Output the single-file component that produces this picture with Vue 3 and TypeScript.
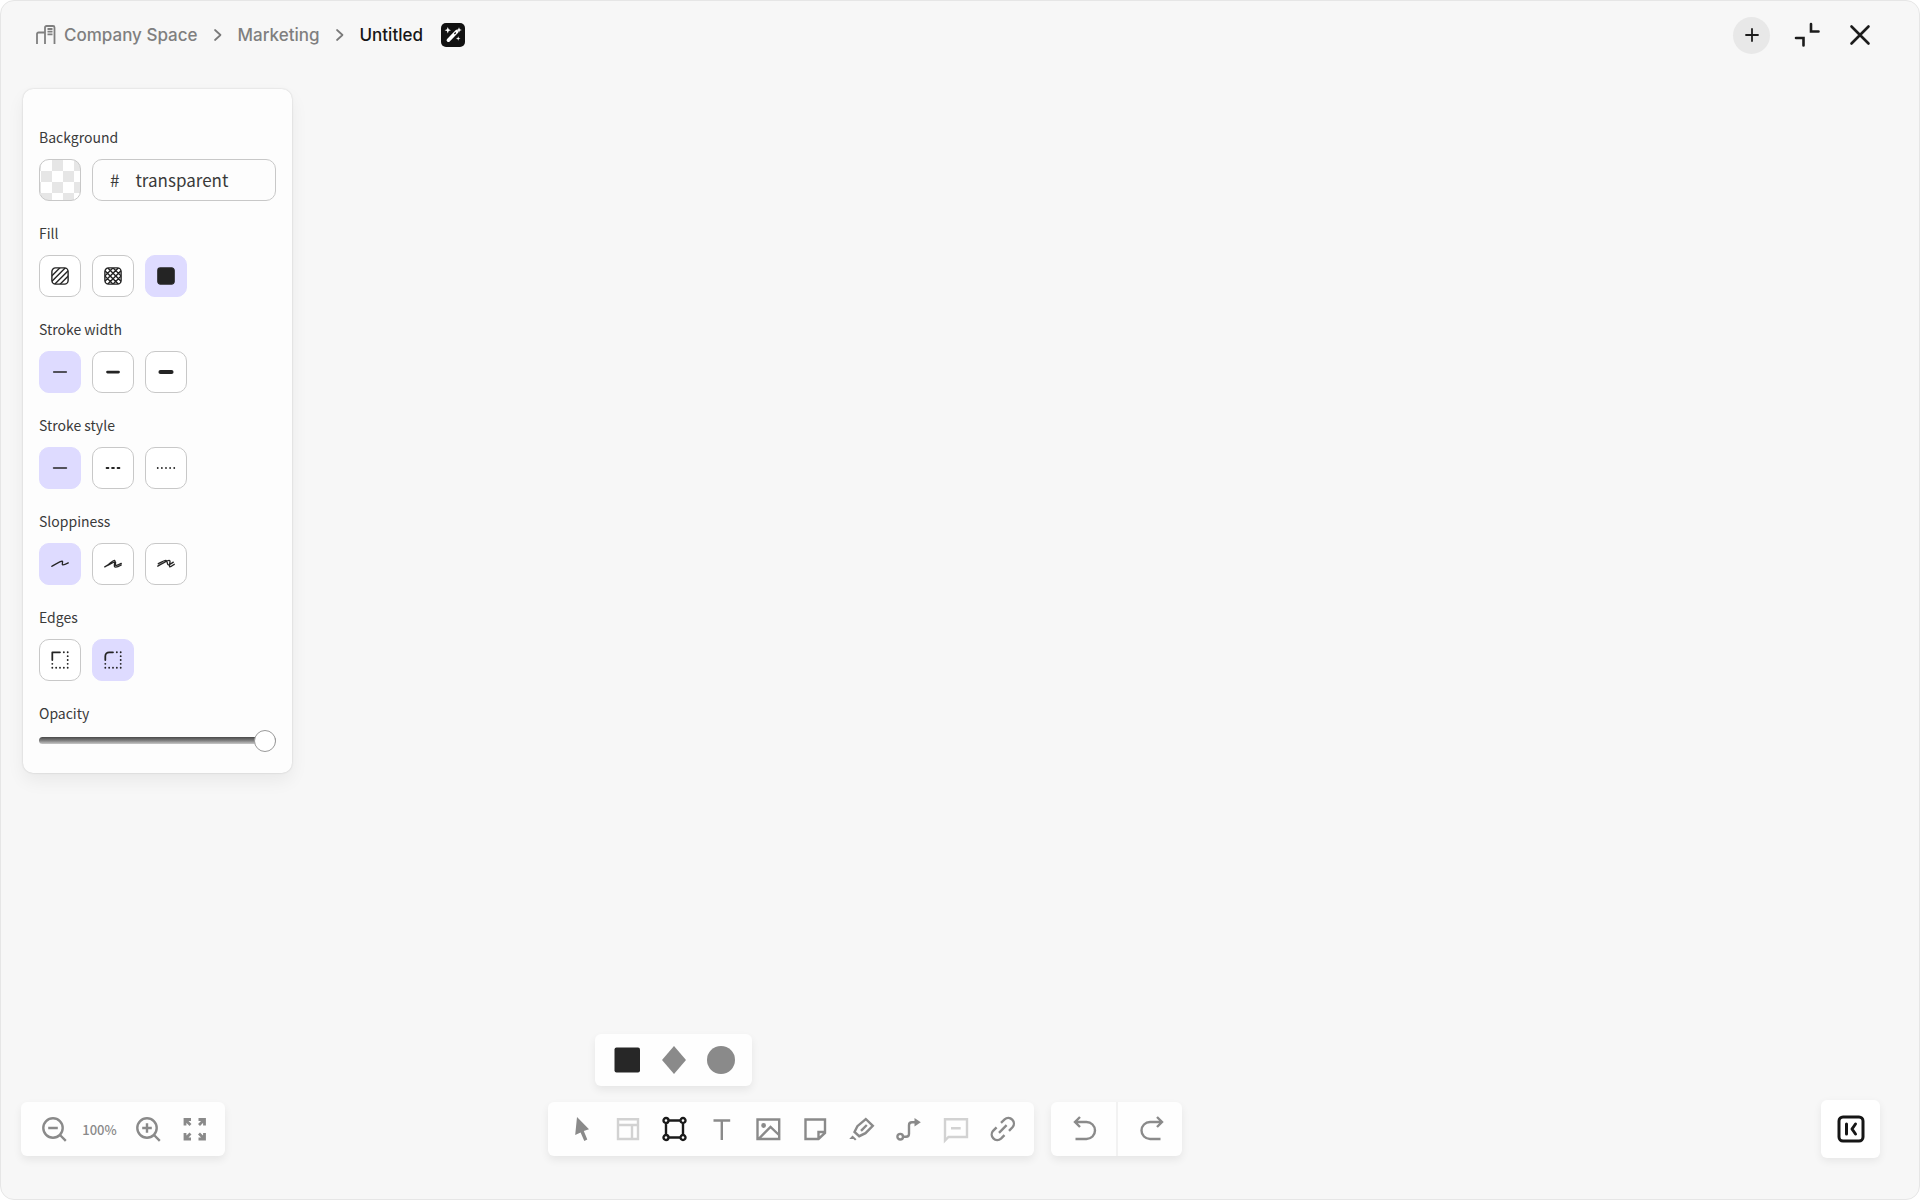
<script setup lang="ts">
import { ref } from 'vue'

interface Option {
  id: string
  label: string
  box: number
  paths: { d: string; w: number; fill?: boolean }[]
  hatch?: string
}
interface Group {
  id: string
  title: string
  options: Option[]
}

const square =
  'M5.879 2.625h8.242a3.254 3.254 0 0 1 3.254 3.254v8.242a3.254 3.254 0 0 1-3.254 3.254H5.88a3.254 3.254 0 0 1-3.254-3.254V5.88a3.254 3.254 0 0 1 3.254-3.254Z'

const groups: Group[] = [
  {
    id: 'fill',
    title: 'Fill',
    options: [
      {
        id: 'hachure', label: 'Hachure', box: 20, paths: [{ d: square, w: 1.25 }],
        hatch: 'M2.258 15.156 15.156 2.258M7.324 20.222 20.222 7.325m-20.444 5.35L12.675-.222m-8.157 18.34L17.416 5.22',
      },
      {
        id: 'cross', label: 'Cross-hatch', box: 20, paths: [{ d: square, w: 1.25 }],
        hatch: 'M2.426 15.044 15.044 2.426M7.383 20 20 7.383M0 12.617 12.617 0m-7.98 17.941L17.256 5.324m-2.211 12.25L2.426 4.956M20 12.617 7.383 0m5.234 20L0 7.383m17.941 7.98L5.324 2.745',
      },
      {
        id: 'solid', label: 'Solid', box: 20,
        paths: [{ d: 'M4.91 2.625h10.18a2.284 2.284 0 0 1 2.285 2.284v10.182a2.284 2.284 0 0 1-2.284 2.284H4.909a2.284 2.284 0 0 1-2.284-2.284V4.909a2.284 2.284 0 0 1 2.284-2.284Z', w: 1.25, fill: true }],
      },
    ],
  },
  {
    id: 'width',
    title: 'Stroke width',
    options: [
      { id: 'thin', label: 'Thin', box: 20, paths: [{ d: 'M4.2 10h11.6', w: 1.25 }] },
      { id: 'bold', label: 'Bold', box: 20, paths: [{ d: 'M5 10h10', w: 2.5 }] },
      { id: 'extra', label: 'Extra bold', box: 20, paths: [{ d: 'M5 10h10', w: 3.75 }] },
    ],
  },
  {
    id: 'style',
    title: 'Stroke style',
    options: [
      { id: 'line', label: 'Solid line', box: 20, paths: [{ d: 'M4.2 10h11.6', w: 1.5 }] },
      { id: 'dashed', label: 'Dashed', box: 24, paths: [{ d: 'M5 12h2M11 12h2M17 12h2', w: 2 }] },
      { id: 'dotted', label: 'Dotted', box: 24, paths: [{ d: 'M3 12v.01M7.5 12v.01M12 12v.01M16.5 12v.01M21 12v.01', w: 2 }] },
    ],
  },
  {
    id: 'slop',
    title: 'Sloppiness',
    options: [
      { id: 'architect', label: 'Architect', box: 20, paths: [{ d: 'M2.5 12.038c1.655-.885 5.9-3.292 8.568-4.354 2.668-1.063.101 2.821 1.32 3.104 1.218.283 5.112-1.814 5.112-1.814', w: 1.25 }] },
      { id: 'artist', label: 'Artist', box: 20, paths: [{ d: 'M2.5 12.563c1.655-.886 5.9-3.293 8.568-4.355 2.668-1.062.101 2.822 1.32 3.105 1.218.283 5.112-1.814 5.112-1.814m-13.469 2.23c2.963-1.586 6.13-5.62 7.468-4.998 1.338.623-1.153 4.11-.132 5.595 1.02 1.487 6.133-1.43 6.133-1.43', w: 1.25 }] },
      { id: 'cartoonist', label: 'Cartoonist', box: 20, paths: [{ d: 'M2.5 11.936c1.737-.879 8.627-5.346 10.42-5.268 1.795.078-.418 5.138.345 5.736.763.598 3.53-1.789 4.235-2.147M2.929 9.788c1.164-.519 5.47-3.28 6.987-3.114 1.519.165 1 3.827 2.121 4.109 1.122.281 3.839-2.016 4.606-2.42', w: 1.25 }] },
    ],
  },
  {
    id: 'edges',
    title: 'Edges',
    options: [
      {
        id: 'sharp', label: 'Sharp', box: 20,
        paths: [
          { d: 'M3 10V3H10', w: 1.6 },
          { d: 'M13.5 3v.01M17 3v.01M17 6.5v.01M17 10v.01M17 13.5v.01M17 17v.01M13.5 17v.01M10 17v.01M6.5 17v.01M3 17v.01M3 13.5v.01', w: 1.7 },
        ],
      },
      {
        id: 'round', label: 'Round', box: 20,
        paths: [
          { d: 'M3 10V6.5a3.5 3.5 0 0 1 3.5-3.5H10', w: 1.6 },
          { d: 'M13.5 3v.01M17 3v.01M17 6.5v.01M17 10v.01M17 13.5v.01M17 17v.01M13.5 17v.01M10 17v.01M6.5 17v.01M3 17v.01M3 13.5v.01', w: 1.7 },
        ],
      },
    ],
  },
]

const selected = ref<Record<string, string>>({
  fill: 'solid',
  width: 'thin',
  style: 'line',
  slop: 'architect',
  edges: 'round',
})
const background = ref('transparent')
const opacity = ref(100)
const tool = ref('Shape')
const shape = ref('Rectangle')

const tools = [
  { name: 'Select', d: '', solid: 'M-3-12 9 .3 3.8 2 7.3 10.5 4.3 12 .6 3.6-4.8 6z' },
  { name: 'Template', d: 'M-9-9.8H11V10H-9ZM-9-4H11M5-4V10', faint: true },
  { name: 'Shape', d: 'M-5-8.5H6M-5 8.5H6M-8-5.5V5.5M9-5.5V5.5M-10.5-8.5a2.5 2.5 0 1 0 5 0a2.5 2.5 0 1 0-5 0M6.5-8.5a2.5 2.5 0 1 0 5 0a2.5 2.5 0 1 0-5 0M-10.5 8.5a2.5 2.5 0 1 0 5 0a2.5 2.5 0 1 0-5 0M6.5 8.5a2.5 2.5 0 1 0 5 0a2.5 2.5 0 1 0-5 0' },
  { name: 'Text', d: 'M-7.5-8.5H9.2M.8-8.5V11' },
  { name: 'Image', d: 'M-10.5-9.5H11.2V10H-10.5ZM-9 9.5 2.5-2 11 6', solid: 'M-6.8-3.5a2.4 2.4 0 1 0 4.8 0a2.4 2.4 0 1 0-4.8 0' },
  { name: 'Note', d: 'M-9.5-9.5H10V4L3.5 10H-9.5ZM3.5 10V3H10' },
  { name: 'Highlighter', d: 'M3.8-10 10.8-3.2 3.5 4.2-2.8 7.2-7.5 3-4.6-2.8ZM-1 1.8 4.8-4', solid: 'M-9.5 6.5-5.5 10.2-7 11.5-8.5 10H-12.8Z' },
  { name: 'Connector', d: 'M-6 7.7H-3Q0 7.7 0 4.7V-3.7Q0-6.7 3-6.7H6M-11.6 7.7a2.8 2.8 0 1 0 5.6 0a2.8 2.8 0 1 0-5.6 0', solid: 'M5.5-11 11.8-6.7 5.5-2.4Z' },
  { name: 'Comment', d: 'M-11-9.7H11V8H-7.5L-11 11.5ZM-5-.8H4.7', faint: true },
  { name: 'Link', d: 'M-2 -6.2L1.6-9.6A5.6 5.6 0 0 1 9.5-1.7L6 1.8M1.5 6.2L-2 9.7A5.6 5.6 0 0 1-9.9 1.8L-6.4-1.7M-4 3.8 3.6-3.8' },
]

const shapes = [
  { name: 'Rectangle', d: 'M-10.5-12.5H11a2 2 0 0 1 2 2V10.5a2 2 0 0 1-2 2H-10.5a2 2 0 0 1-2-2V-10.5a2 2 0 0 1 2-2Z' },
  { name: 'Diamond', d: 'M0-14 12 0 0 14-12 0Z' },
  { name: 'Ellipse', d: 'M-14 0a14 14 0 1 0 28 0a14 14 0 1 0-28 0' },
]
</script>

<template>
  <div class="frame">
    <header class="top">
      <nav class="crumbs" aria-label="Breadcrumb">
        <a href="#" class="crumb space">
          <svg class="building" viewBox="0 0 20 20" aria-hidden="true">
            <path d="M1 19V9a1.5 1.5 0 0 1 1.5-1.5H9M9 19V2.5A1.5 1.5 0 0 1 10.5 1H17A1.5 1.5 0 0 1 18.5 2.5V19M11.5 4h5M11.5 6.7h5M11.5 9.4h5" />
          </svg>
          Company Space
        </a>
        <svg class="chevron" viewBox="0 0 8 12" aria-hidden="true"><path d="M1 1 6.5 6 1 11" /></svg>
        <a href="#" class="crumb">Marketing</a>
        <svg class="chevron" viewBox="0 0 8 12" aria-hidden="true"><path d="M1 1 6.5 6 1 11" /></svg>
        <a href="#" class="crumb current">Untitled</a>
        <button class="magic" type="button" aria-label="AI assistant">
          <svg viewBox="0 0 24 24" aria-hidden="true">
            <path class="wand" d="M7.4 17.2 15.6 8.7" />
            <path class="notch" d="M13.4 11 14.8 9.5" />
            <path class="spark" d="M6.8 4 7.7 6.3 10 7.2 7.7 8.1 6.8 10.4 5.9 8.1 3.6 7.2 5.9 6.3ZM18 4.2 18.8 6.2 20.8 7 18.8 7.8 18 9.8 17.2 7.8 15.2 7 17.2 6.2ZM17.2 13.2 17.8 14.9 19.5 15.5 17.8 16.1 17.2 17.8 16.6 16.1 14.9 15.5 16.6 14.9Z" />
          </svg>
        </button>
      </nav>
      <div class="actions">
        <button class="add" type="button" aria-label="Add">
          <svg class="ic thin" viewBox="-14 -14 28 28"><path d="M-6 0H6M0-6V6" /></svg>
        </button>
        <button type="button" aria-label="Collapse">
          <svg class="ic" viewBox="-14 -14 28 28"><path d="M3-11V-3.5H10.5M-12 3H-4.5V10.5" /></svg>
        </button>
        <button type="button" aria-label="Close">
          <svg class="ic" viewBox="-14 -14 28 28"><path d="M-8.5-8.5 8.5 8.5M8.5-8.5-8.5 8.5" /></svg>
        </button>
      </div>
    </header>

    <main class="canvas">
      <aside class="panel">
        <section class="field">
          <label class="title" for="bg">Background</label>
          <div class="row">
            <button class="swatch" type="button" aria-label="Pick background"></button>
            <div class="hex">
              <span>#</span>
              <input id="bg" v-model="background" type="text" />
            </div>
          </div>
        </section>
        <section v-for="g in groups" :key="g.id" class="field">
          <h2 class="title">{{ g.title }}</h2>
          <div class="row">
            <button
              v-for="o in g.options"
              :key="o.id"
              type="button"
              class="opt"
              :class="{ on: selected[g.id] === o.id }"
              :aria-label="o.label"
              @click="selected[g.id] = o.id"
            >
              <svg :viewBox="`0 0 ${o.box} ${o.box}`" aria-hidden="true">
                <clipPath v-if="o.hatch" :id="`clip-${o.id}`"><path :d="square" /></clipPath>
                <path v-for="(p, i) in o.paths" :key="i" :d="p.d" :stroke-width="p.w" :class="{ full: p.fill }" />
                <path v-if="o.hatch" :d="o.hatch" stroke-width="1.25" :clip-path="`url(#clip-${o.id})`" />
              </svg>
            </button>
          </div>
        </section>
        <section class="field opacity">
          <label class="title" for="opacity">Opacity</label>
          <input id="opacity" v-model="opacity" type="range" min="0" max="100" />
        </section>
      </aside>
    </main>

    <footer class="bottom">
      <div class="bar">
        <button class="tool" type="button" aria-label="Zoom out">
          <svg class="tic" viewBox="-14 -14 28 28"><circle cx="0" cy="-1" r="9.7" /><path d="M-4.8-1H4.8M7 6 12.8 11.8" /></svg>
        </button>
        <button class="tool percent" type="button">100%</button>
        <button class="tool" type="button" aria-label="Zoom in">
          <svg class="tic" viewBox="-14 -14 28 28"><circle cx="0" cy="-1" r="9.7" /><path d="M-4.8-1H4.8M0-5.8V3.8M7 6 12.8 11.8" /></svg>
        </button>
        <button class="tool" type="button" aria-label="Fit to screen">
          <svg class="tic fit" viewBox="-14 -14 28 28"><path d="M-9-3.5V-9.5H-3M-8.5-9-3.5-4M4.5-9.5H10.5V-3.5M10-9 5-4M-9 4V10H-3M-8.5 9.5-3.5 4.5M4.5 10H10.5V4M10 9.5 5 4.5" /></svg>
        </button>
      </div>

      <div class="center">
        <div class="bar tools">
          <button
            v-for="t in tools"
            :key="t.name"
            type="button"
            class="tool"
            :class="{ faint: t.faint, active: tool === t.name }"
            :aria-label="t.name"
            @click="tool = t.name"
          >
            <svg class="tic" viewBox="-14 -14 28 28" aria-hidden="true">
              <path v-if="t.d" :d="t.d" />
              <path v-if="t.solid" class="solid" :d="t.solid" />
            </svg>
          </button>
          <div class="bar shapes">
            <button
              v-for="s in shapes"
              :key="s.name"
              type="button"
              class="tool"
              :class="{ chosen: shape === s.name }"
              :aria-label="s.name"
              @click="shape = s.name"
            >
              <svg class="tic" viewBox="-14 -14 28 28" aria-hidden="true"><path class="solid" :d="s.d" /></svg>
            </button>
          </div>
        </div>
        <div class="bar history">
          <button class="step" type="button" aria-label="Undo">
            <svg class="tic" viewBox="-14 -14 28 28"><path d="M-9-7H2.5a8.5 8.5 0 0 1 0 17H-8.5M-4-12-9-7-4-2" /></svg>
          </button>
          <button class="step" type="button" aria-label="Redo">
            <svg class="tic" viewBox="-14 -14 28 28"><path d="M12-7H0a8.5 8.5 0 0 0 0 17H10.5M7-12 12-7 7-2" /></svg>
          </button>
        </div>
      </div>

      <button class="dock" type="button" aria-label="Open side panel">
        <svg viewBox="-14 -14 28 28" aria-hidden="true"><rect x="-12" y="-12" width="24" height="24" rx="4" /><path d="M-4.5-5V5M4.5-5 1 0 4.5 5" /></svg>
      </button>
    </footer>
  </div>
</template>

<style>
body {
  margin: 0;
  background: #fff;
}
</style>

<style scoped>
* {
  box-sizing: border-box;
}
button {
  padding: 0;
  border: 0;
  background: none;
  font: inherit;
  color: inherit;
  cursor: pointer;
}
svg {
  display: block;
  fill: none;
  stroke: currentColor;
  overflow: visible;
}
.frame {
  display: flex;
  flex-direction: column;
  min-height: 100vh;
  border: 1px solid #e6e6e6;
  border-radius: 14px;
  background: #f7f7f7;
  color: #1c1c1c;
  font-family: Inter, "Liberation Sans", sans-serif;
}
.top {
  display: flex;
  align-items: center;
  justify-content: space-between;
  height: 68px;
  padding: 0 45px 0 35px;
}
.crumbs {
  display: flex;
  align-items: center;
}
.crumb {
  display: flex;
  align-items: center;
  gap: 8px;
  font-size: 17px;
  font-weight: 500;
  line-height: 24px;
  color: #7f7f7f;
  text-decoration: none;
}
.crumb.current {
  color: #161616;
}
.building {
  width: 20px;
  height: 20px;
  stroke-width: 1.8;
}
.chevron {
  width: 8px;
  height: 12px;
  margin: 0 16px;
  color: #7a7a7a;
  stroke-width: 1.7;
  stroke-linecap: round;
  stroke-linejoin: round;
}
.magic {
  width: 24px;
  height: 24px;
  margin-left: 18px;
  border-radius: 5px;
  background: #111;
  color: #fff;
}
.wand {
  stroke-width: 3.6;
  stroke-linecap: round;
}
.notch {
  stroke: #111;
  stroke-width: 1.2;
}
.spark {
  fill: currentColor;
  stroke: none;
}
.actions {
  display: flex;
  align-items: center;
  gap: 24px;
}
.add {
  display: grid;
  place-items: center;
  width: 37px;
  height: 37px;
  border-radius: 50%;
  background: #e8e8e8;
}
.ic {
  width: 28px;
  height: 28px;
  stroke-width: 2.6;
  stroke-linecap: round;
}
.ic.thin {
  stroke-width: 1.8;
}
.canvas {
  flex: 1;
  padding: 20px 22px;
}
.panel {
  width: 269px;
  padding: 36px 16px 22px;
  border-radius: 10px;
  background: #fdfdfd;
  box-shadow: 0 0 2px rgba(0, 0, 0, 0.18), 0 8px 18px rgba(0, 0, 0, 0.06);
  color: #3a3a3a;
  font-family: "Noto Sans CJK SC", "Noto Sans", sans-serif;
}
.field {
  display: flex;
  flex-direction: column;
  gap: 10px;
  margin-bottom: 20px;
}
.title {
  margin: 0;
  font-size: 14px;
  font-weight: 400;
  line-height: 24px;
}
.row {
  display: flex;
  gap: 11px;
}
.swatch,
.opt,
.hex {
  width: 42px;
  height: 42px;
  border: 1px solid #c8c8c8;
  border-radius: 10px;
}
.swatch {
  background: repeating-conic-gradient(#e6e6e6 0 25%, #fff 0 50%) 1px 0 / 22px 22px;
}
.hex {
  display: flex;
  flex: 1;
  align-items: center;
  gap: 16px;
  padding: 0 12px 2px 17px;
  font-size: 17px;
}
.hex input {
  width: 100%;
  min-width: 0;
  padding: 0;
  border: 0;
  outline: 0;
  background: none;
  font: inherit;
  color: inherit;
}
.opt {
  display: grid;
  place-items: center;
  background: #fff;
  color: #242424;
}
.opt.on {
  border-color: #dedbff;
  background: #dedbff;
}
.opt svg {
  width: 22px;
  height: 22px;
  stroke-linecap: round;
  stroke-linejoin: round;
}
.full {
  fill: currentColor;
}
.opacity {
  gap: 4px;
  margin-bottom: 0;
}
.opacity input {
  width: 100%;
  height: 22px;
  margin: 0;
  appearance: none;
  background: none;
}
.opacity input::-webkit-slider-runnable-track {
  height: 7px;
  border-radius: 4px;
  background: linear-gradient(#4a4a4a, #777 45%, #c8c8c8);
}
.opacity input::-webkit-slider-thumb {
  appearance: none;
  width: 22px;
  height: 22px;
  margin-top: -7px;
  border: 1px solid #9a9a9a;
  border-radius: 50%;
  background: #fff;
}
.bottom {
  display: grid;
  grid-template-columns: auto 1fr auto 2fr auto;
  align-items: center;
  padding: 0 39px 41px 20px;
}
.center {
  grid-column: 3;
  display: flex;
  gap: 17px;
  margin-left: 4px;
}
.bar {
  display: flex;
  height: 54px;
  padding: 0 8px;
  border-radius: 6px;
  background: #fefefe;
  box-shadow: 0 4px 8px rgba(0, 0, 0, 0.07);
}
.tools {
  position: relative;
}
.shapes {
  position: absolute;
  bottom: 70px;
  left: 47px;
  height: 52px;
}
.tool {
  display: grid;
  place-items: center;
  width: 47px;
  color: #8a8a8a;
}
.percent {
  font-family: "Noto Sans CJK SC", "Noto Sans", sans-serif;
  font-size: 13px;
  font-weight: 500;
}
.tic {
  width: 28px;
  height: 28px;
  stroke-width: 2.4;
}
.fit {
  stroke-width: 2.8;
}
.solid {
  fill: currentColor;
  stroke: none;
}
.faint {
  color: #d2d2d2;
}
.active {
  color: #1a1a1a;
}
.chosen {
  color: #272727;
}
.history {
  padding: 0;
}
.step {
  display: grid;
  place-items: center;
  width: 65px;
  color: #8a8a8a;
}
.step + .step {
  width: 66px;
  border-left: 2px solid #f2f2f2;
}
.dock {
  grid-column: 5;
  display: grid;
  place-items: center;
  width: 59px;
  height: 58px;
  border-radius: 6px;
  background: #fff;
  box-shadow: 0 3px 8px rgba(0, 0, 0, 0.07);
  color: #161616;
}
.dock svg {
  width: 28px;
  height: 28px;
  stroke-width: 3;
  stroke-linecap: round;
  stroke-linejoin: round;
}
</style>
